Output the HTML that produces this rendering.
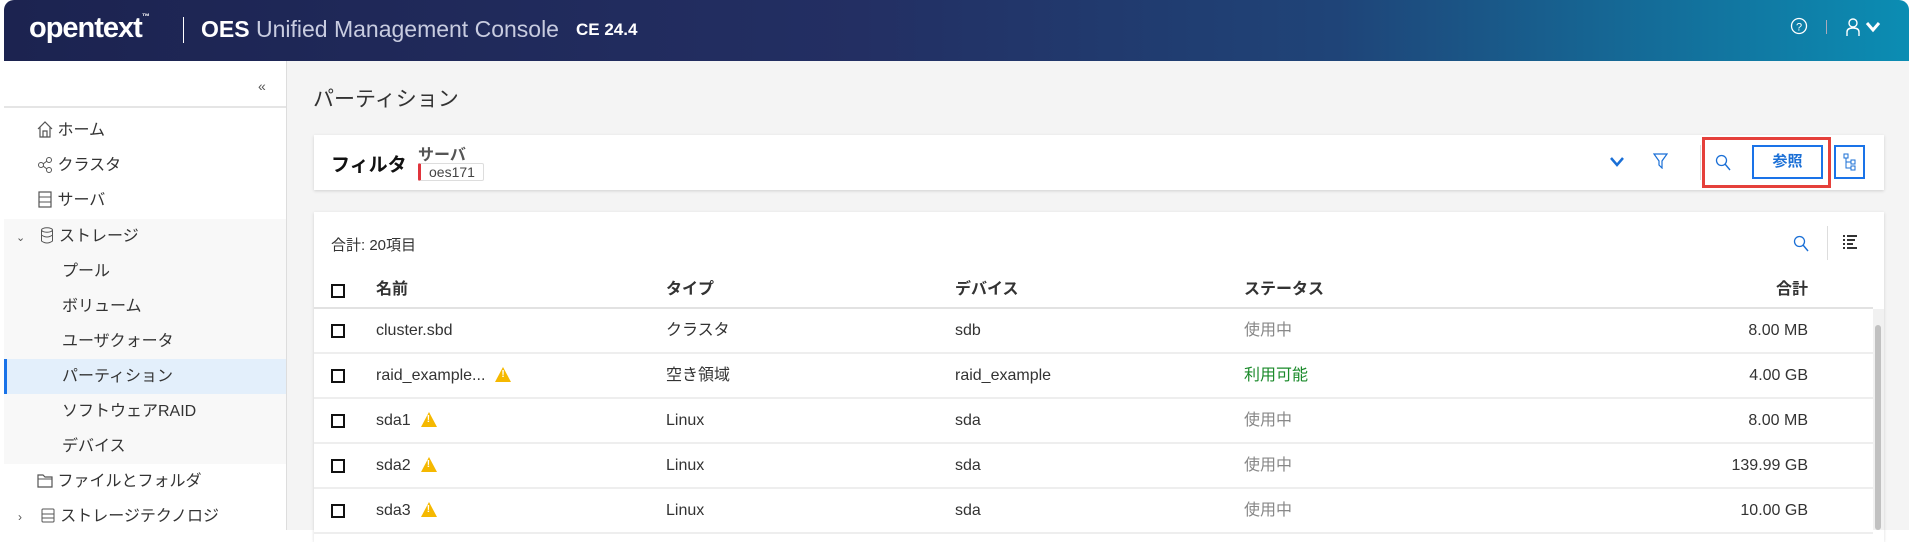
<!DOCTYPE html>
<html><head><meta charset="utf-8"><style>
*{box-sizing:border-box;margin:0;padding:0}
body{width:1913px;height:530px;overflow:hidden;background:#fff;font-family:"Liberation Sans","Noto Sans CJK JP",sans-serif;color:#333;font-size:16px;position:relative}
.hdr{position:absolute;left:4px;top:0;width:1905px;height:61px;background:linear-gradient(90deg,#1c2350 0%,#232f63 45%,#1f4478 70%,#0b8db3 100%);border-radius:10px 10px 0 0;color:#fff}
.abs{position:absolute;white-space:nowrap}
.side{position:absolute;left:4px;top:61px;width:283px;height:469px;background:#fff;border-right:1px solid #ddd}
.main{position:absolute;left:287px;top:61px;width:1622px;height:469px;background:#f4f4f4}
.item{position:absolute;left:0;width:282px;height:35px;line-height:35px;font-size:16px;color:#333}
.card{position:absolute;background:#fff;box-shadow:0 1px 3px rgba(0,0,0,.15)}
.cb{position:absolute;width:14px;height:14px;border:2px solid #111}
.warn{display:inline-block;width:0;height:0;border-left:8px solid transparent;border-right:8px solid transparent;border-bottom:15px solid #f5b800;vertical-align:-2px;margin-left:10px;position:relative}
.warn:after{content:"!";position:absolute;left:-2px;top:2px;font-size:10px;line-height:12px;color:#fff;font-weight:bold}
.row{position:absolute;left:314px;width:1559px;height:45px;border-bottom:2px solid #eee}
.row .abs{top:0;height:43px;line-height:43px}
</style></head><body>
<div class="hdr">
 <div class="abs" style="left:25px;top:12px;font-size:29px;font-weight:bold;letter-spacing:-1px">opentext<span style="font-size:8px;vertical-align:top">™</span></div>
 <div class="abs" style="left:179px;top:17px;width:1px;height:26px;background:#fff"></div>
 <div class="abs" style="left:197px;top:16px;font-size:23px"><b>OES</b> <span style="color:#c8cce0">Unified Management Console</span></div>
 <div class="abs" style="left:572px;top:20px;font-size:17px;font-weight:bold">CE 24.4</div>
 <svg class="abs" style="left:1786px;top:17px" width="18" height="18"><circle cx="9" cy="9" r="7.5" fill="none" stroke="#fff" stroke-width="1.3"/><text x="9" y="13.5" font-size="11" fill="#fff" text-anchor="middle" font-family="Liberation Sans">?</text></svg>
 <div class="abs" style="left:1822px;top:20px;width:1px;height:14px;background:#aab"></div>
 <svg class="abs" style="left:1841px;top:17px" width="16" height="20"><circle cx="8" cy="6" r="4" fill="none" stroke="#fff" stroke-width="1.4"/><path d="M2 19V15Q2 11 8 11Q14 11 14 15V19" fill="none" stroke="#fff" stroke-width="1.4"/></svg>
 <svg class="abs" style="left:1861px;top:21px" width="16" height="12"><path d="M2 2L8 9L14 2" fill="none" stroke="#fff" stroke-width="3"/></svg>
</div>
<div class="side">
 <div class="abs" style="left:254px;top:17px;font-size:14px;color:#555">«</div>
 <div class="abs" style="left:0;top:45px;width:282px;height:2px;background:#e5e5e5"></div>
 <div class="abs" style="left:0;top:158px;width:282px;height:245px;background:#f8f8f8"></div>
 <div class="item" style="top:52px;padding-left:33px"><svg width="16" height="17" style="vertical-align:-3px"><path d="M1 8L8 1L15 8M3 6V16H13V6M6 16V10H10V16" fill="none" stroke="#555" stroke-width="1.2"/></svg> ホーム</div>
 <div class="item" style="top:87px;padding-left:33px"><svg width="16" height="17" style="vertical-align:-3px"><circle cx="4" cy="9" r="2.5" fill="none" stroke="#555"/><circle cx="12" cy="4" r="2.5" fill="none" stroke="#555"/><circle cx="12" cy="14" r="2.5" fill="none" stroke="#555"/><path d="M6 8L10 5M6 10L10 13" stroke="#555"/></svg> クラスタ</div>
 <div class="item" style="top:122px;padding-left:33px"><svg width="16" height="17" style="vertical-align:-3px"><rect x="2" y="1" width="12" height="15" fill="none" stroke="#555" stroke-width="1.2"/><path d="M2 6H14M2 11H14" stroke="#555"/></svg> サーバ</div>
 <div class="item" style="top:158px;padding-left:12px"><span style="font-size:11px;color:#555">⌄</span>&nbsp;&nbsp;&nbsp;<svg width="16" height="17" style="vertical-align:-3px"><ellipse cx="8" cy="3" rx="5.5" ry="2.2" fill="none" stroke="#555"/><path d="M2.5 3V14Q8 18 13.5 14V3M2.5 8Q8 12 13.5 8" fill="none" stroke="#555"/></svg> ストレージ</div>
 <div class="item" style="top:193px;padding-left:58px">プール</div>
 <div class="item" style="top:228px;padding-left:58px">ボリューム</div>
 <div class="item" style="top:263px;padding-left:58px">ユーザクォータ</div>
 <div class="item" style="top:298px;padding-left:58px;background:#e3effb;border-left:3px solid #1a73e8;padding-left:55px">パーティション</div>
 <div class="item" style="top:333px;padding-left:58px">ソフトウェアRAID</div>
 <div class="item" style="top:368px;padding-left:58px">デバイス</div>
 <div class="item" style="top:403px;padding-left:33px"><svg width="16" height="17" style="vertical-align:-3px"><path d="M1 3H6L8 5H15V15H1Z" fill="none" stroke="#555" stroke-width="1.2"/><path d="M1 7H15" stroke="#555"/></svg> ファイルとフォルダ</div>
 <div class="item" style="top:438px;padding-left:14px"><span style="font-size:12px;color:#555">›</span>&nbsp;&nbsp;&nbsp;&nbsp;<svg width="16" height="17" style="vertical-align:-3px"><rect x="2" y="2" width="12" height="13" rx="1" fill="none" stroke="#555"/><path d="M2 7H14M2 11H14" stroke="#555"/></svg> ストレージテクノロジ</div>
</div>
<div class="main"></div>
<div class="abs" style="left:313px;top:83px;font-size:21px;color:#333">パーティション</div>
<div class="card" style="left:314px;top:135px;width:1570px;height:55px">
 <div class="abs" style="left:17px;top:15px;font-size:19px;font-weight:bold;color:#111">フィルタ</div>
 <div class="abs" style="left:104px;top:6px;font-size:16px;color:#555;font-weight:bold">サーバ</div>
 <div class="abs" style="left:104px;top:28px;height:18px;padding:0 8px;border:1px solid #ddd;border-left:3px solid #e0343c;border-radius:2px;font-size:14px;line-height:16px;color:#444">oes171</div>
 <svg class="abs" style="left:1296px;top:22px" width="14" height="10"><path d="M1 1L7 8L13 1" fill="none" stroke="#1a6fd6" stroke-width="2.5"/></svg>
 <svg class="abs" style="left:1339px;top:18px" width="15" height="16"><path d="M1 1H14L9 8V15L6 12V8Z" fill="none" stroke="#1a6fd6" stroke-width="1.2"/></svg>
 <div class="abs" style="left:1386px;top:10px;width:1px;height:35px;background:#ddd"></div>
 <svg class="abs" style="left:1401px;top:19px" width="16" height="17"><circle cx="6.5" cy="6.5" r="5" fill="none" stroke="#1a6fd6" stroke-width="1.3"/><path d="M10 10L15 16" stroke="#1a6fd6" stroke-width="1.4"/></svg>
 <div class="abs" style="left:1438px;top:10px;width:71px;height:34px;border:2px solid #1a73e8;color:#1a6fd6;font-size:15px;font-weight:bold;text-align:center;line-height:30px">参照</div>
 <div class="abs" style="left:1388px;top:2px;width:129px;height:51px;border:3px solid #e5403b"></div>
 <div class="abs" style="left:1520px;top:10px;width:31px;height:34px;border:2px solid #1a73e8"></div>
 <svg class="abs" style="left:1529px;top:18px" width="14" height="18"><rect x="1" y="1" width="4" height="4" fill="none" stroke="#1a6fd6"/><rect x="8" y="7" width="4" height="4" fill="none" stroke="#1a6fd6"/><rect x="8" y="13" width="4" height="4" fill="none" stroke="#1a6fd6"/><path d="M3 5V15H8M3 9H8" fill="none" stroke="#1a6fd6"/></svg>
</div>
<div class="card" style="left:314px;top:212px;width:1570px;height:330px"></div>
<div class="abs" style="left:331px;top:234px;font-size:15px;color:#333">合計: 20項目</div>
<svg class="abs" style="left:1793px;top:235px" width="16" height="17"><circle cx="6.5" cy="6.5" r="5" fill="none" stroke="#1a6fd6" stroke-width="1.3"/><path d="M10 10L15 16" stroke="#1a6fd6" stroke-width="1.4"/></svg>
<div class="abs" style="left:1827px;top:226px;width:1px;height:34px;background:#ddd"></div>
<svg class="abs" style="left:1842px;top:234px" width="16" height="16"><path d="M1 2H3M5 2H15M1 6H3M5 6H13M1 10H3M5 10H11M1 14H3M5 14H15" stroke="#333" stroke-width="2"/></svg>
<div class="row" style="top:273px;height:36px;border-bottom:2px solid #e2e2e2;font-weight:bold;color:#333">
 <div class="cb" style="left:17px;top:11px"></div>
 <div class="abs" style="left:62px;height:34px;line-height:34px">名前</div>
 <div class="abs" style="left:352px;height:34px;line-height:34px">タイプ</div>
 <div class="abs" style="left:641px;height:34px;line-height:34px">デバイス</div>
 <div class="abs" style="left:930px;height:34px;line-height:34px">ステータス</div>
 <div class="abs" style="right:65px;height:34px;line-height:34px">合計</div>
</div>
<div class="row" style="top:309px"><div class="cb" style="left:17px;top:15px"></div><div class="abs" style="left:62px">cluster.sbd</div><div class="abs" style="left:352px">クラスタ</div><div class="abs" style="left:641px">sdb</div><div class="abs" style="left:930px;color:#888">使用中</div><div class="abs" style="right:65px">8.00 MB</div></div>
<div class="row" style="top:354px"><div class="cb" style="left:17px;top:15px"></div><div class="abs" style="left:62px">raid_example...<span class="warn"></span></div><div class="abs" style="left:352px">空き領域</div><div class="abs" style="left:641px">raid_example</div><div class="abs" style="left:930px;color:#1a8a2a">利用可能</div><div class="abs" style="right:65px">4.00 GB</div></div>
<div class="row" style="top:399px"><div class="cb" style="left:17px;top:15px"></div><div class="abs" style="left:62px">sda1<span class="warn"></span></div><div class="abs" style="left:352px">Linux</div><div class="abs" style="left:641px">sda</div><div class="abs" style="left:930px;color:#888">使用中</div><div class="abs" style="right:65px">8.00 MB</div></div>
<div class="row" style="top:444px"><div class="cb" style="left:17px;top:15px"></div><div class="abs" style="left:62px">sda2<span class="warn"></span></div><div class="abs" style="left:352px">Linux</div><div class="abs" style="left:641px">sda</div><div class="abs" style="left:930px;color:#888">使用中</div><div class="abs" style="right:65px">139.99 GB</div></div>
<div class="row" style="top:489px"><div class="cb" style="left:17px;top:15px"></div><div class="abs" style="left:62px">sda3<span class="warn"></span></div><div class="abs" style="left:352px">Linux</div><div class="abs" style="left:641px">sda</div><div class="abs" style="left:930px;color:#888">使用中</div><div class="abs" style="right:65px">10.00 GB</div></div>
<div class="abs" style="left:1873px;top:309px;width:11px;height:221px;background:#f1f1f1"></div>
<div class="abs" style="left:1875px;top:325px;width:6px;height:205px;background:#c1c1c1;border-radius:3px"></div>
</body></html>
